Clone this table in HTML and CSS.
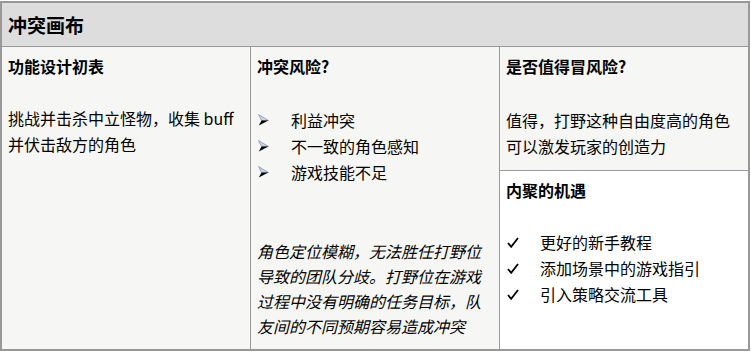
FILE: index.html
```
<!DOCTYPE html>
<html lang="zh">
<head>
<meta charset="utf-8">
<title>冲突画布</title>
<link rel="stylesheet" href="styles.css">
</head>
<body>
<div class="canvas">
  <div class="title">冲突画布</div>
  <div class="grid">
    <div class="cell">
      <p class="head">功能设计初表</p>
      <p class="blank"></p>
      <p class="body c1">挑战并击杀中立怪物，收集 buff<br>并伏击敌方的角色</p>
    </div>
    <div class="cell">
      <p class="head">冲突风险?</p>
      <p class="blank"></p>
      <ul class="list arrows">
        <li><svg class="mark" width="11" height="12" viewBox="0 0 11 12"><path d="M0.5 0.5 L10.5 6.5 L3.5 6.5 Z" fill="#c9d3e6" stroke="#8a98b4" stroke-width="0.8"/><path d="M3.5 6.5 L10.5 6.5 L0.8 11.5 Z" fill="#000"/></svg>利益冲突</li>
        <li><svg class="mark" width="11" height="12" viewBox="0 0 11 12"><path d="M0.5 0.5 L10.5 6.5 L3.5 6.5 Z" fill="#c9d3e6" stroke="#8a98b4" stroke-width="0.8"/><path d="M3.5 6.5 L10.5 6.5 L0.8 11.5 Z" fill="#000"/></svg>不一致的角色感知</li>
        <li><svg class="mark" width="11" height="12" viewBox="0 0 11 12"><path d="M0.5 0.5 L10.5 6.5 L3.5 6.5 Z" fill="#c9d3e6" stroke="#8a98b4" stroke-width="0.8"/><path d="M3.5 6.5 L10.5 6.5 L0.8 11.5 Z" fill="#000"/></svg>游戏技能不足</li>
      </ul>
      <p class="blank"></p>
      <p class="blank"></p>
      <p class="italic">角色定位模糊，无法胜任打野位导致的团队分歧。打野位在游戏过程中没有明确的任务目标，队友间的不同预期容易造成冲突</p>
    </div>
    <div class="stack">
      <div class="cell top">
        <p class="head">是否值得冒风险?</p>
        <p class="blank"></p>
        <p class="body c3">值得，打野这种自由度高的角色<br>可以激发玩家的创造力</p>
      </div>
      <div class="cell bottom">
        <p class="head">内聚的机遇</p>
        <p class="blank"></p>
        <ul class="list checks">
          <li><svg class="mark" width="12" height="11" viewBox="0 0 12 11"><path d="M1 6 L4.2 9.8 L11 1" fill="none" stroke="#000" stroke-width="1.8"/></svg>更好的新手教程</li>
          <li><svg class="mark" width="12" height="11" viewBox="0 0 12 11"><path d="M1 6 L4.2 9.8 L11 1" fill="none" stroke="#000" stroke-width="1.8"/></svg>添加场景中的游戏指引</li>
          <li><svg class="mark" width="12" height="11" viewBox="0 0 12 11"><path d="M1 6 L4.2 9.8 L11 1" fill="none" stroke="#000" stroke-width="1.8"/></svg>引入策略交流工具</li>
        </ul>
      </div>
    </div>
  </div>
</div>
</body>
</html>
```

FILE: styles.css
```
html, body {
  margin: 0;
  padding: 0;
  background: #ffffff;
}

body {
  font-family: "Noto Sans CJK SC", "Noto Sans", sans-serif;
  color: #000;
}

.canvas {
  box-sizing: border-box;
  width: 750px;
  margin-top: 1px;
  border: 2px solid #999999;
}

.title {
  height: 43px;
  border-bottom: 1px solid #999999;
  background: #dddddd;
  font-size: 19px;
  font-weight: bold;
  line-height: 43px;
  padding-left: 6px;
}

.grid {
  display: grid;
  grid-template-columns: 248px 249px 249px;
  height: 302px;
}

.cell {
  box-sizing: border-box;
  background: #f6f6f4;
  padding: 6px 6px 0 6px;
  font-size: 16px;
  line-height: 26px;
}

.grid > .cell + .cell,
.stack {
  border-left: 1px solid #999999;
}

.stack {
  display: flex;
  flex-direction: column;
}

.stack .top {
  height: 124px;
  border-bottom: 1px solid #999999;
}

.stack .bottom {
  flex: 1;
  background: #ffffff;
  padding-top: 6px;
}

p {
  margin: 0;
}

.head {
  font-weight: bold;
}

.blank {
  height: 26px;
}

.c3 {
  margin-top: 3px;
  line-height: 25.5px;
}

.list {
  list-style: none;
  margin: 0;
  padding: 0;
}

.arrows {
  margin-top: 2px;
  margin-bottom: 2px;
}

.list li {
  display: flex;
  align-items: center;
  height: 26px;
  padding-left: 1px;
}

.list .mark {
  flex: none;
  width: 32px;
}

.arrows .mark {
  width: 11px;
  margin-right: 22px;
}

.checks .mark {
  width: 12px;
  margin-right: 21px;
  margin-top: 1px;
}

.italic {
  font-style: italic;
  line-height: 25px;
  padding-right: 4px;
}
```
